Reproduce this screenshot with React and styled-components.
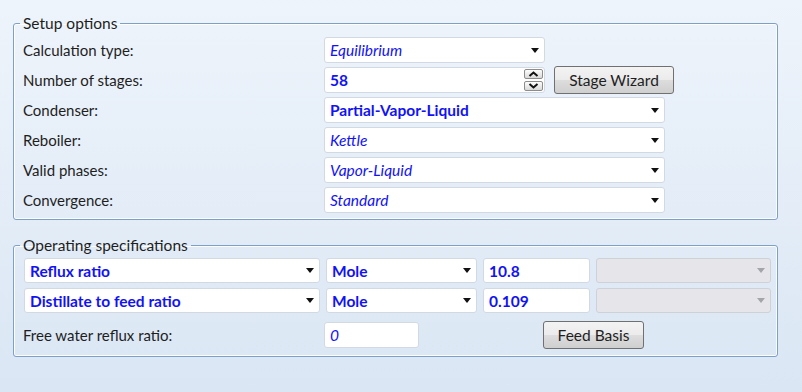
import React from 'react'
import styled, { createGlobalStyle } from 'styled-components'

const GlobalStyle = createGlobalStyle`
  html, body {
    margin: 0;
    padding: 0;
  }
  body {
    font-family: Lato, "Noto Sans", sans-serif;
  }
`

const valueBlue = '#1212f8'

const Page = styled.div`
  box-sizing: border-box;
  width: 802px;
  height: 392px;
  padding: 14px 24px 0 13px;
  background: linear-gradient(#eef4fb, #dae6f4);
  color: #1e1e1e;
  font-size: 15px;
`

const Group = styled.fieldset`
  margin: 0;
  border: 1px solid #7f9fc4;
  border-radius: 3px;
  box-shadow: inset 0 0 0 1px rgba(255, 255, 255, 0.85);
  padding: ${props => props.$pad};
  & + & {
    margin-top: 16px;
  }
`

const Legend = styled.legend`
  padding: 0 3px;
  margin-left: -3px;
  line-height: 18px;
  font-size: 15.5px;
`

const SetupGrid = styled.div`
  display: grid;
  grid-template-columns: 301px 1fr;
  grid-auto-rows: 26px;
  row-gap: 4px;
  align-items: center;
`

const Label = styled.div`
  font-size: 15px;
  white-space: nowrap;
`

const ComboBox = styled.div`
  box-sizing: border-box;
  display: flex;
  align-items: center;
  width: ${props => props.$width};
  height: ${props => props.$height || '26px'};
  padding: 0 5px;
  border: 1px solid ${props => props.$disabled ? '#cfd1d8' : '#d3d9e3'};
  border-radius: 3px;
  background: ${props => props.$disabled ? '#e6e6ea' : '#fff'};
`

const ValueText = styled.span`
  flex: 1;
  color: ${valueBlue};
  font-size: 15.5px;
  font-style: ${props => props.$bold ? 'normal' : 'italic'};
  font-weight: ${props => props.$bold ? 700 : 400};
  white-space: nowrap;
  overflow: hidden;
`

const Arrow = styled.span`
  width: 0;
  height: 0;
  border-left: 4px solid transparent;
  border-right: 4px solid transparent;
  border-top: 5px solid ${props => props.$disabled ? '#a3a5ab' : '#111'};
`

const FieldRow = styled.div`
  display: flex;
  align-items: center;
  gap: 9px;
`

const SpinBox = styled.div`
  display: flex;
  flex-direction: column;
  gap: 2px;
  margin-right: -4px;
`

const SpinButton = styled.div`
  box-sizing: border-box;
  width: 19px;
  height: 10px;
  display: flex;
  align-items: center;
  justify-content: center;
  border: 1px solid #8c8c8c;
  border-radius: 2px;
  background: linear-gradient(#fdfdfd, #d9d9d9);
`

const Button = styled.button`
  box-sizing: border-box;
  width: ${props => props.$width};
  height: 28px;
  padding: 0;
  border: 1px solid #707070;
  border-radius: 3px;
  background: linear-gradient(#f3f3f3 0%, #ebebeb 50%, #dddddd 51%, #cfcfcf 100%);
  color: #1e1e1e;
  font-family: Lato, "Noto Sans", sans-serif;
  font-size: 15.5px;
`

const SpecGrid = styled.div`
  display: grid;
  grid-template-columns: 296px 151px 107px 1fr;
  grid-auto-rows: 25px;
  column-gap: 6px;
  row-gap: 5px;
  margin-left: 1px;
`

const WaterRow = styled.div`
  display: flex;
  align-items: center;
  margin-top: 8px;
`

const WaterLabel = styled(Label)`
  width: 301px;
`

const WaterButton = styled(Button)`
  margin-left: 124px;
`

function Chevron({ up }) {
  return (
    <svg width="11" height="6" viewBox="0 0 11 6">
      <path
        d={up ? 'M1.5 5 L5.5 1.5 L9.5 5' : 'M1.5 1 L5.5 4.5 L9.5 1'}
        fill="none"
        stroke="#111"
        strokeWidth="2"
      />
    </svg>
  )
}

function Combo({ value, bold, width, height, disabled }) {
  return (
    <ComboBox $width={width} $height={height} $disabled={disabled}>
      <ValueText $bold={bold}>{value}</ValueText>
      <Arrow $disabled={disabled} />
    </ComboBox>
  )
}

const setupRows = [
  { label: 'Calculation type:', value: 'Equilibrium', width: '221px' },
  { label: 'Number of stages:', spinner: true },
  { label: 'Condenser:', value: 'Partial-Vapor-Liquid', bold: true, width: '341px' },
  { label: 'Reboiler:', value: 'Kettle', width: '341px' },
  { label: 'Valid phases:', value: 'Vapor-Liquid', width: '341px' },
  { label: 'Convergence:', value: 'Standard', width: '341px' },
]

const specRows = [
  { spec: 'Reflux ratio', basis: 'Mole', value: '10.8' },
  { spec: 'Distillate to feed ratio', basis: 'Mole', value: '0.109' },
]

export default function App() {
  return (
    <>
      <GlobalStyle />
      <Page>
        <Group $pad="5px 9px 6px">
          <Legend>Setup options</Legend>
          <SetupGrid>
            {setupRows.map(row => (
              <React.Fragment key={row.label}>
                <Label>{row.label}</Label>
                {row.spinner ? (
                  <FieldRow>
                    <ComboBox $width="221px">
                      <ValueText $bold>58</ValueText>
                      <SpinBox>
                        <SpinButton><Chevron up /></SpinButton>
                        <SpinButton><Chevron /></SpinButton>
                      </SpinBox>
                    </ComboBox>
                    <Button $width="120px">Stage Wizard</Button>
                  </FieldRow>
                ) : (
                  <Combo value={row.value} bold={row.bold} width={row.width} />
                )}
              </React.Fragment>
            ))}
          </SetupGrid>
        </Group>

        <Group $pad="4px 6px 7px 9px">
          <Legend>Operating specifications</Legend>
          <SpecGrid>
            {specRows.map(row => (
              <React.Fragment key={row.spec}>
                <Combo value={row.spec} bold width="100%" height="25px" />
                <Combo value={row.basis} bold width="100%" height="25px" />
                <ComboBox $width="100%" $height="25px">
                  <ValueText $bold>{row.value}</ValueText>
                </ComboBox>
                <Combo value="" disabled width="100%" height="25px" />
              </React.Fragment>
            ))}
          </SpecGrid>
          <WaterRow>
            <WaterLabel>Free water reflux ratio:</WaterLabel>
            <ComboBox $width="95px">
              <ValueText>0</ValueText>
            </ComboBox>
            <WaterButton $width="101px">Feed Basis</WaterButton>
          </WaterRow>
        </Group>
      </Page>
    </>
  )
}
